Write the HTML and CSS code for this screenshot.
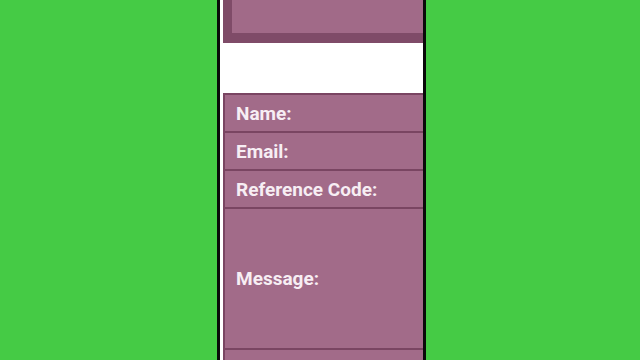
FILE: index.html
```html
<!DOCTYPE html>
<html>
<head>
<meta charset="utf-8">
<link rel="stylesheet" href="styles.css">
</head>
<body>
<div class="stage">
  <div class="phone">
    <div class="card-outer"><div class="card-inner"></div></div>
    <div class="gap"></div>
    <div class="form">
      <div class="row">Name:</div>
      <div class="row">Email:</div>
      <div class="row">Reference Code:</div>
      <div class="row tall">Message:</div>
      <div class="row"></div>
    </div>
  </div>
</div>
</body>
</html>
```
FILE: styles.css
```css
html, body {
  margin: 0;
  padding: 0;
  height: 100%;
  background: #45cb45;
  overflow: hidden;
}
.stage {
  display: flex;
  justify-content: flex-start;
  padding-left: 217px;
  height: 360px;
}
.phone {
  width: 200px;
  height: 360px;
  border-left: 3px solid #0a0a0a;
  border-right: 3px solid #0a0a0a;
  background: #ffffff;
  overflow: hidden;
  padding-left: 3px;
  box-sizing: content-box;
  display: flex;
  flex-direction: column;
}
.card-outer {
  background: #7f4b68;
  padding-left: 9px;
  padding-bottom: 10px;
  width: 220px;
}
.card-inner {
  height: 33px;
  background: #a16a88;
}
.gap {
  height: 50px;
  flex: none;
}
.form {
  width: 220px;
  border-left: 2px solid #7a4562;
  display: flex;
  flex-direction: column;
}
.row {
  flex: none;
  height: 36px;
  border-top: 2px solid #7a4562;
  background: #a26b89;
  display: flex;
  align-items: center;
  padding-left: 11px;
  font-family: Roboto, "Liberation Sans", sans-serif;
  font-weight: 700;
  font-size: 19px;
  color: #f7eef4;
}
.tall {
  height: 139px;
}
```
